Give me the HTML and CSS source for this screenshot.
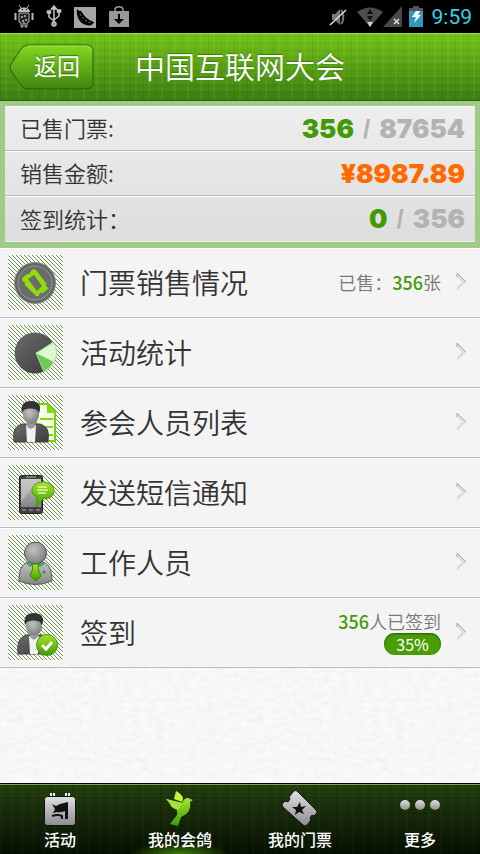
FILE: index.html
```html
<!DOCTYPE html>
<html lang="zh-CN">
  <head>
    <meta charset="UTF-8" />
    <meta name="viewport" content="width=device-width, initial-scale=1.0" />
    <title>中国互联网大会</title>
    <link rel="stylesheet" href="styles.css">
  </head>
  <body>
    <!-- shared gradients -->
    <svg class="defs" width="0" height="0" aria-hidden="true">
      <defs>
        <linearGradient id="grey" x1="0" y1="0" x2="0" y2="1">
          <stop offset="0" stop-color="#c4c4c4" /><stop offset="1" stop-color="#858585" />
        </linearGradient>
        <linearGradient id="silver" x1="0" y1="0" x2="0" y2="1">
          <stop offset="0" stop-color="#e0e0e0" /><stop offset="1" stop-color="#8c8c8c" />
        </linearGradient>
        <linearGradient id="dark" x1="0" y1="0" x2="1" y2="1">
          <stop offset="0" stop-color="#6c6c6e" /><stop offset="1" stop-color="#3b3b3d" />
        </linearGradient>
        <linearGradient id="lime" x1="0" y1="0" x2="0" y2="1">
          <stop offset="0" stop-color="#a5e52b" /><stop offset="1" stop-color="#3d9a03" />
        </linearGradient>
        <radialGradient id="head" cx=".4" cy=".35" r=".7">
          <stop offset="0" stop-color="#c2c2c2" /><stop offset="1" stop-color="#7a7a7a" />
        </radialGradient>
      </defs>
    </svg>

    <div class="status-bar">
      <svg width="20" height="23" viewBox="0 0 20 23">
        <path d="M5 0l2 3M15 0l-2 3" stroke="#bbb" />
        <path d="M4 7c0-6 12-6 12 0z" fill="#bbb" />
        <path d="M5 8h10v9l-2 1v4h-2v-4H9v4H7v-4l-2-1z" fill="#222" stroke="#bbb" />
        <path d="M7 11h2v2H7zM10 10h2v2h-2zM11 14h2v2h-2zM8 15h2v2H8z" fill="#999" />
        <path d="M1.500 8v7M18.500 8v7" stroke="#bbb" stroke-width="2" />
        <path d="M8 4h1v1H8zM12 4h1v1h-1z" fill="#000" />
      </svg>
      <svg width="16" height="23" viewBox="0 0 16 23" fill="none" stroke="#c5c5c5" stroke-width="1.500">
        <path d="M8 3v16M8 16l-5-4V8M8 15l5-4V7" />
        <circle cx="8" cy="19" r="2" fill="#888" />
        <path d="M5.500 4L8 1l2.500 3z" fill="#c5c5c5" />
        <path d="M1.500 6h3v2h-3zM11.500 5h3v2h-3z" fill="#c5c5c5" />
      </svg>
      <svg width="22" height="22" viewBox="0 0 22 22">
        <path d="M0 1h22v21H0z" fill="#a5a5a5" />
        <path d="M3 3c1 1 2 2 4 2c3 5 7 9 13 11c-1 3-4 4-8 3C5 17 2 10 3 3z" fill="#000" />
        <path d="M6 8q4 7 11 9" fill="none" stroke="#888" stroke-width="1" stroke-dasharray="2 2" />
      </svg>
      <svg width="22" height="22" viewBox="0 0 22 22">
        <path d="M7 5V3c1-3 7-3 8 0v2" fill="none" stroke="#999" stroke-width="1.500" />
        <path d="M1 5h20v16H1z" fill="#999" />
        <path d="M11 8v7" stroke="#000" stroke-width="2" />
        <path d="M6 13h10l-5 5z" fill="#000" />
      </svg>
      <div class="status-right">
        <svg width="18" height="20" viewBox="0 0 18 20">
          <path d="M3 7h3l5-5v16l-5-5H3z" fill="#777" />
          <path d="M12 3c3 3 3 11 0 14" fill="none" stroke="#777" stroke-width="2" />
          <path d="M1 18L17 3" stroke="#ddd" stroke-width="1.500" />
        </svg>
        <svg width="26" height="20" viewBox="0 0 26 20">
          <path d="M0 5q13-9 26 0L13 20z" fill="#4d4d4d" />
          <path d="M13 2l3 5h-6zM10 9h6l-3 5z" fill="#111" />
          <path d="M10 15h6l-3 5z" fill="#d0d0d0" />
        </svg>
        <svg class="signal" width="19" height="21" viewBox="0 0 19 21">
          <path d="M19 0v21H0z" fill="#484848" />
          <path d="M11 13l5 5M16 13l-5 5" stroke="#ddd" stroke-width="1.500" />
        </svg>
        <svg class="battery" width="14" height="21" viewBox="0 0 14 21">
          <path d="M4 0h6v2h4v4H0V2h4z" fill="#555" />
          <path d="M0 5h14v16H0z" fill="#3399c4" />
          <path d="M7 5h4L9 9h3l-7 8 2-6H3z" fill="#fff" />
        </svg>
        <span class="clock">9:59</span>
      </div>
    </div>

    <header class="header">
      <button type="button" class="back">
        <svg class="back-shape" width="86" height="47" viewBox="0 0 86 47">
          <defs>
            <linearGradient id="backFill" x1="0" y1="0" x2="0" y2="1">
              <stop offset="0" stop-color="#83d91f" /><stop offset="1" stop-color="#3f840f" />
            </linearGradient>
          </defs>
          <path d="M19 1h58q7 0 7 7v30q0 7-7 7H19q-4 0-7-4L2 27q-2-4 0-7L12 5q3-4 7-4z" fill="url(#backFill)" stroke="#275e07" />
          <path d="M19 2h58q5 0 6 5" fill="none" stroke="#a0e64d" />
        </svg>
        <span class="back-text">返回</span>
      </button>
      <h1>中国互联网大会</h1>
    </header>

    <dl class="stats">
      <div class="stat">
        <dt>已售门票:</dt>
        <dd><span class="green">356</span><span class="slash">/</span>87654</dd>
      </div>
      <div class="stat">
        <dt>销售金额:</dt>
        <dd class="orange">¥8987.89</dd>
      </div>
      <div class="stat">
        <dt>签到统计：</dt>
        <dd><span class="green">0</span><span class="slash">/</span>356</dd>
      </div>
    </dl>

    <main class="content">
      <nav class="menu">
        <a class="item" href="#tickets">
          <svg class="icon" width="55" height="55" viewBox="0 0 55 55">
            <circle cx="27" cy="28" r="20.500" fill="#666" stroke="#8b8b8b" />
            <circle cx="27" cy="28" r="17" fill="#6c6c6c" stroke="#999" />
            <path fill-rule="evenodd" d="M14 23l5-4q3 1 3-2l3-3 3 1 10 13q-1 4 3 5l-6 5q-4-1-4 3h-3L17 30q1-3-3-4zM20 24l9 12 5-5-8-11z" fill="#8edc0c" />
          </svg>
          <span class="name">门票销售情况</span>
          <span class="note">已售：<b>356</b>张</span>
          <svg class="arrow" width="12" height="20" viewBox="0 0 12 20"><path d="M1 1l9 9-9 9v-4l5-5-5-5z" fill="#ddd" /><path d="M1 5V1l9 9" fill="none" stroke="#aaa" /></svg>
        </a>
        <a class="item" href="#report">
          <svg class="icon" width="55" height="55" viewBox="0 0 55 55">
            <circle cx="27" cy="28" r="20.500" fill="url(#dark)" />
            <path d="M28 28l17-11c5 9 4 19-3 26l-5 3z" fill="#fff" />
            <path d="M28 28l17-10q5 10 1 19z" fill="#ddf8d3" />
            <path d="M28 28l18 9q-3 6-10 10z" fill="#73c65a" />
            <path d="M28 28l18-10q5 10 0 19L36 47z" fill="none" stroke="#a5df91" />
          </svg>
          <span class="name">活动统计</span>
          <svg class="arrow" width="12" height="20" viewBox="0 0 12 20"><path d="M1 1l9 9-9 9v-4l5-5-5-5z" fill="#ddd" /><path d="M1 5V1l9 9" fill="none" stroke="#aaa" /></svg>
        </a>
        <a class="item" href="#people">
          <svg class="icon" width="55" height="55" viewBox="0 0 55 55">
            <path d="M28 9h12l7 8v29H28z" fill="#f4ffe8" stroke="#72d400" stroke-width="2" />
            <path d="M39 8v10h9zM32 23h13v2H32zM32 31h13v2H32zM32 39h13v2H32z" fill="#7fdb0a" />
            <path d="M6 47c-1-11 0-15 8-18h18c8 3 9 7 8 18z" fill="url(#dark)" stroke="#444" />
            <path d="M18 30h10l-1 17h-8z" fill="#f1f1f1" />
            <path d="M19 26h8v6l-4 2-4-2z" fill="#999" />
            <path d="M15 17c0-8 16-8 16 0c1 8-4 12-8 12s-9-4-8-12z" fill="url(#head)" />
            <path d="M14 18C12 10 16 6 23 6c8 0 11 5 8 12l-2-3c-4-2-9-2-13 0z" fill="#333" />
          </svg>
          <span class="name">参会人员列表</span>
          <svg class="arrow" width="12" height="20" viewBox="0 0 12 20"><path d="M1 1l9 9-9 9v-4l5-5-5-5z" fill="#ddd" /><path d="M1 5V1l9 9" fill="none" stroke="#aaa" /></svg>
        </a>
        <a class="item" href="#sms">
          <svg class="icon" width="55" height="55" viewBox="0 0 55 55">
            <rect x="11.500" y="10.500" width="23" height="38" rx="2" fill="#424242" stroke="#222" />
            <path d="M13 14h20v28H13z" fill="url(#grey)" />
            <path d="M13 14h18L13 37z" fill="#ccc" opacity=".5" />
            <path d="M18 12h10M14 45h4M21 45h4M28 45h4" stroke="#aaa" />
            <path d="M29 32l-1 10 7-8c8 0 11-4 11-8c0-12-22-12-22 0q0 4 5 6z" fill="url(#lime)" stroke="#4b9d08" />
            <path d="M30 22h9M29 25h11M30 28h8" stroke="#dff6bb" stroke-width="1.500" />
          </svg>
          <span class="name">发送短信通知</span>
          <svg class="arrow" width="12" height="20" viewBox="0 0 12 20"><path d="M1 1l9 9-9 9v-4l5-5-5-5z" fill="#ddd" /><path d="M1 5V1l9 9" fill="none" stroke="#aaa" /></svg>
        </a>
        <a class="item" href="#staff">
          <svg class="icon" width="55" height="55" viewBox="0 0 55 55">
            <path d="M11 46c0-11 3-17 9-19h15c6 2 9 8 9 19q-17 7-33 0z" fill="url(#grey)" stroke="#555" />
            <path d="M18 29l4-3 5 3 6-3 4 3-5 3-5-2-5 2z" fill="#43a968" />
            <circle cx="27.500" cy="18" r="11" fill="url(#head)" stroke="#555" />
            <path d="M24 29h7l-1 4 3 8-5 5-6-5 3-8z" fill="url(#lime)" stroke="#398509" />
            <path d="M34 37h4M36 35v4" stroke="#666" />
          </svg>
          <span class="name">工作人员</span>
          <svg class="arrow" width="12" height="20" viewBox="0 0 12 20"><path d="M1 1l9 9-9 9v-4l5-5-5-5z" fill="#ddd" /><path d="M1 5V1l9 9" fill="none" stroke="#aaa" /></svg>
        </a>
        <a class="item" href="#checkin">
          <svg class="icon" width="55" height="55" viewBox="0 0 55 55">
            <path d="M10 49c-1-11 1-16 8-19h16c8 2 9 8 9 19z" fill="url(#dark)" stroke="#444" />
            <path d="M21 31h10l-1 18h-8z" fill="#f1f1f1" />
            <path d="M22 27h8v5l-4 3-4-3z" fill="#999" />
            <path d="M18 19c0-8 16-8 16 0c1 8-4 11-8 11s-9-3-8-11z" fill="url(#head)" />
            <path d="M17 20C15 12 19 8 26 8c8 0 11 5 8 12l-2-3c-4-2-9-2-13 0z" fill="#333" />
            <circle cx="39" cy="40" r="10.500" fill="url(#lime)" stroke="#4b9d08" />
            <path d="M34 40l4 4 6-7" fill="none" stroke="#fff" stroke-width="3" />
          </svg>
          <span class="name">签到</span>
          <span class="note"><b>356</b>人已签到<span class="percent">35%</span></span>
          <svg class="arrow" width="12" height="20" viewBox="0 0 12 20"><path d="M1 1l9 9-9 9v-4l5-5-5-5z" fill="#ddd" /><path d="M1 5V1l9 9" fill="none" stroke="#aaa" /></svg>
        </a>
      </nav>
    </main>

    <nav class="tabs">
      <a class="tab" href="#events">
        <svg width="36" height="40" viewBox="0 0 36 40">
          <path d="M9 3v6M12 3v6M24 3v6M27 3v6" stroke="#eee" stroke-width="2" />
          <rect x="2.500" y="6.500" width="31" height="29" rx="3" fill="url(#silver)" stroke="#111" />
          <path d="M10 14l4 2 4-2 8-2v17h-3v-8q-5 2-8 1l-4 1 2-4z" fill="#111" />
          <path d="M10 26q6-2 10 0v3" fill="none" stroke="#111" stroke-width="2" />
        </svg>
        活动
      </a>
      <a class="tab active" href="#mine">
        <svg width="36" height="40" viewBox="0 0 36 40">
          <path d="M14 1c4 2 7 5 7 8l-1 3-8-3z" fill="#c9ee3c" />
          <path d="M4 9l16 4c2-5 6-6 8-4l3 1-3 2c1 8-2 12-9 15l-3 9-8-2 7-9c1-3-1-5 0-7z" fill="url(#lime)" />
          <path d="M4 9l17 4-5 7q-7-2-8-6z" fill="#a6df38" />
        </svg>
        我的会鸽
      </a>
      <a class="tab" href="#my-tickets">
        <svg width="40" height="40" viewBox="0 0 40 40">
          <path d="M17 1l19 19q2 2 0 4l-2 2-2-1-2 3 1 2-4 5q-2 2-4 0L3 17q-2-2 0-4l2-2 3 1 2-3-1-2 5-6q1-1 3 0z" fill="url(#silver)" stroke="#111" />
          <path d="M20 12l1 5 5-1-4 4 2 4-5-2-4 3 1-5-4-3h5z" fill="#111" />
        </svg>
        我的门票
      </a>
      <a class="tab" href="#more">
        <svg width="42" height="40" viewBox="0 0 42 40">
          <g fill="url(#silver)"><circle cx="6" cy="15" r="5" /><circle cx="21" cy="15" r="5" /><circle cx="36" cy="15" r="5" /></g>
        </svg>
        更多
      </a>
    </nav>
  </body>
</html>
```
FILE: styles.css
```css
* {
  box-sizing: border-box;
}

body {
  font-family: "Noto Sans CJK SC", sans-serif;
  background-color: #f3f3f3;
  color: #333;
  margin: 0;
  display: flex;
  flex-direction: column;
  min-height: 100vh;
}

a {
  color: inherit;
  text-decoration: none;
}

svg {
  display: block;
  flex: none;
}

.defs {
  position: absolute;
}

/* status bar */
.status-bar {
  background-color: #000;
  height: 33px;
  padding: 0 8px 0 14px;
  display: flex;
  align-items: center;
  gap: 12px;
}

.status-right {
  margin-left: auto;
  display: flex;
  align-items: center;
}

.status-right svg:nth-child(2) {
  margin-left: 10px;
}

.battery {
  margin: 0 9px 0 7px;
}

.clock {
  font: 21px/24px Roboto, sans-serif;
  color: #34d3ea;
}

/* header */
.header {
  height: 68px;
  padding: 0 8px;
  display: flex;
  align-items: center;
  gap: 39px;
  color: #fff;
  border-top: 1px solid #9ce045;
  border-bottom: 1px solid #2c6a08;
  background:
    repeating-linear-gradient(90deg, rgba(0, 40, 0, 0.07) 0 1px, transparent 1px 5px, rgba(255, 255, 120, 0.06) 5px 7px, transparent 7px 13px),
    repeating-linear-gradient(0deg, rgba(0, 40, 0, 0.07) 0 1px, transparent 1px 3px, rgba(255, 255, 120, 0.04) 3px 4px, transparent 4px 7px),
    linear-gradient(#75c319, #3b7c12);
}

.back {
  position: relative;
  width: 88px;
  height: 47px;
  padding: 0 0 0 10px;
  border: none;
  background: none;
  color: #fff;
  font: 23px/32px "Noto Sans CJK SC", sans-serif;
  cursor: pointer;
}

.back-shape {
  position: absolute;
  left: 1px;
  top: 0;
}

.back-text {
  position: relative;
  bottom: 2px;
  text-shadow: 0 -1px 1px #356e0d;
}

h1 {
  margin: 0;
  padding-bottom: 4px;
  font-size: 30px;
  line-height: 40px;
  font-weight: 350;
  text-shadow: 0 -1px 1px #3a7a0d;
}

/* totals */
.stats {
  margin: 0;
  border: 5px solid #9fcb86;
  border-bottom-width: 6px;
  background: linear-gradient(#eee, #ddd);
}

.stat {
  height: 45px;
  padding: 0 10px 0 15px;
  display: flex;
  align-items: center;
  justify-content: space-between;
  border-top: 1px solid #fafafa;
  border-bottom: 1px solid #bbb;
}

.stat:last-child {
  height: 46px;
  border-bottom: 1px solid #eee;
}

dt {
  padding-bottom: 3px;
  font-size: 22px;
  line-height: 32px;
  font-weight: 350;
}

dd {
  margin: 0;
  font: 900 26px/32px Inter, "DejaVu Sans", sans-serif;
  color: #b3b3b3;
}

.slash {
  margin: 0 9px;
  font-family: "Liberation Sans", sans-serif;
  font-weight: 700;
}

.green {
  color: #429b06;
}

.orange {
  color: #ff6a00;
}

/* menu */
.content {
  flex: 1;
  background-color: #f3f3f3;
  background-image: url("data:image/svg+xml,%3Csvg xmlns='http://www.w3.org/2000/svg' width='240' height='240'%3E%3Cfilter id='p' x='0' y='0' width='1' height='1'%3E%3CfeTurbulence type='fractalNoise' baseFrequency='.12 .2' numOctaves='4' stitchTiles='stitch'/%3E%3CfeColorMatrix values='0 0 0 0 .3 0 0 0 0 .3 0 0 0 0 .3 .35 0 0 0 -.1'/%3E%3C/filter%3E%3Crect width='240' height='240' fill='%23fafafa'/%3E%3Crect width='240' height='240' filter='url(%23p)' opacity='.4'/%3E%3C/svg%3E");
}

.item {
  height: 70px;
  padding: 0 12px 2px 8px;
  display: flex;
  align-items: center;
  background-color: #f4f4f4;
  border-top: 1px solid #fff;
  border-bottom: 1px solid #bbb;
}

.icon {
  margin-right: 17px;
  border-radius: 2px;
  background: #fff url("data:image/svg+xml,%3Csvg xmlns='http://www.w3.org/2000/svg' width='4' height='4' shape-rendering='crispEdges' fill='%23639343'%3E%3Cpath d='M0 0h1v1H0zM1 1h1v1H1zM2 2h1v1H2zM3 3h1v1H3z'/%3E%3C/svg%3E");
}

.name {
  font-size: 28px;
  line-height: 40px;
  font-weight: 350;
}

.note {
  margin-left: auto;
  display: flex;
  flex-wrap: wrap;
  justify-content: flex-end;
  width: 120px;
  font-size: 18px;
  line-height: 24px;
  font-weight: 350;
  color: #777;
}

.note b {
  font-weight: 500;
  color: #429b06;
}

.percent {
  width: 57px;
  height: 22px;
  border-radius: 11px;
  background-color: #4b9d08;
  box-shadow: inset 0 1px 2px #245b00;
  color: #fff;
  font-size: 16px;
  line-height: 22px;
  font-weight: 400;
  text-align: center;
}

.arrow {
  margin-left: auto;
}

.note + .arrow {
  margin-left: 15px;
}

/* bottom tabs */
.tabs {
  height: 71px;
  display: grid;
  grid-template-columns: repeat(4, 1fr);
  border-top: 1px solid #000;
  box-shadow: inset 0 1px #75a550;
  background:
    repeating-linear-gradient(90deg, rgba(120, 180, 60, 0.05) 0 1px, transparent 1px 6px, rgba(0, 0, 0, 0.12) 6px 7px, transparent 7px 11px),
    repeating-linear-gradient(0deg, rgba(0, 0, 0, 0.12) 0 1px, transparent 1px 4px),
    linear-gradient(#24400f, #061003);
}

.tab {
  padding-top: 6px;
  display: flex;
  flex-direction: column;
  align-items: center;
  font-size: 16px;
  line-height: 18px;
  font-weight: 500;
  color: #fff;
}

.active {
  background: radial-gradient(ellipse 50px 12px at 50% 100%, #3f7d08, transparent);
}
```
